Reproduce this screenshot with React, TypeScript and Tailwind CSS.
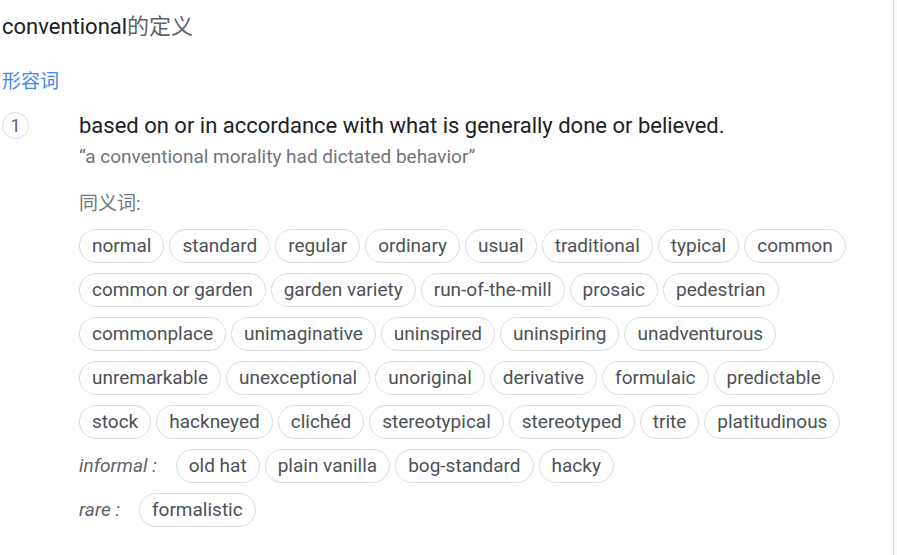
import React from 'react';

const rows: { label?: string; words: string[] }[] = [
    { words: ['normal', 'standard', 'regular', 'ordinary', 'usual', 'traditional', 'typical', 'common'] },
    { words: ['common or garden', 'garden variety', 'run-of-the-mill', 'prosaic', 'pedestrian'] },
    { words: ['commonplace', 'unimaginative', 'uninspired', 'uninspiring', 'unadventurous'] },
    { words: ['unremarkable', 'unexceptional', 'unoriginal', 'derivative', 'formulaic', 'predictable'] },
    { words: ['stock', 'hackneyed', 'clichéd', 'stereotypical', 'stereotyped', 'trite', 'platitudinous'] },
    { label: 'informal', words: ['old hat', 'plain vanilla', 'bog-standard', 'hacky'] },
    { label: 'rare', words: ['formalistic'] },
];

const Chip: React.FC<{ word: string }> = ({ word }) => (
    <span className="inline-flex h-[34px] items-center rounded-full border border-[#dadce0] px-3 text-[19px] text-[#4d5156]">
        {word}
    </span>
);

export default function App() {
    return (
        <div className="flex h-[555px] w-[897px] bg-white font-['Roboto','Noto_Sans_CJK_SC',sans-serif]">
            <div className="flex-1 pl-[2px]">
                <h1 className="pt-[12px] text-[22px] leading-[30px] text-[#202124]">
                    conventional<span className="text-[#5f6368]">的定义</span>
                </h1>
                <div className="mt-[27px] text-[19px] leading-[26px] text-[#4285f4]">形容词</div>
                <div className="mt-[15px] flex">
                    <div className="mt-[2px] flex h-[27px] w-[27px] shrink-0 items-center justify-center rounded-full border border-[#dadce0] text-[18px] text-[#5f6368]">
                        1
                    </div>
                    <div className="ml-[50px] flex-1">
                        <div className="text-[22px] leading-[32px] text-[#202124]">
                            based on or in accordance with what is generally done or believed.
                        </div>
                        <div className="text-[19px] leading-[30px] text-[#70757a]">
                            “a conventional morality had dictated behavior”
                        </div>
                        <div className="mt-[18px] text-[19px] leading-[28px] text-[#70757a]">同义词:</div>
                        <div className="mt-[11px] flex flex-col gap-[10px]">
                            {rows.map((row, i) => (
                                <div key={i} className="flex flex-wrap items-center gap-[5px]">
                                    {row.label && (
                                        <span className="mr-[14px] whitespace-pre text-[19px] italic text-[#5f6368]">
                                            {row.label} :
                                        </span>
                                    )}
                                    {row.words.map((w) => (
                                        <Chip key={w} word={w} />
                                    ))}
                                </div>
                            ))}
                        </div>
                    </div>
                </div>
            </div>
            <div className="w-[4px] border-l border-[#dadce0] bg-[#f8f9fa]" />
        </div>
    );
}
